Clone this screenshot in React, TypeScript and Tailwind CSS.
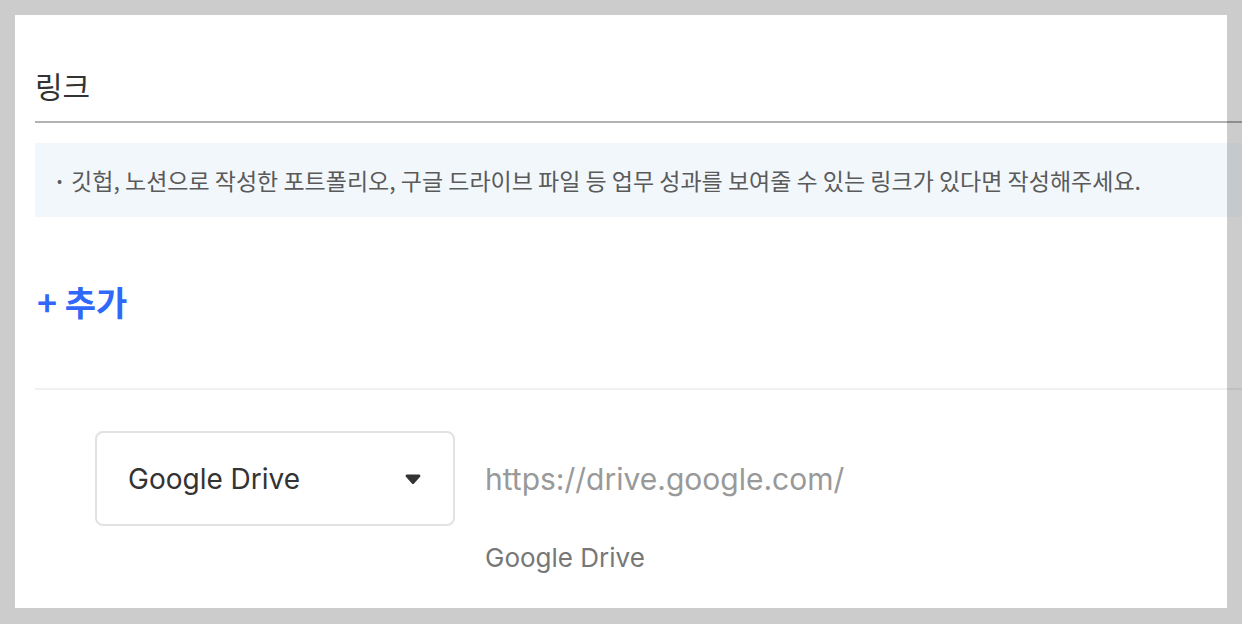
const kr = "font-['Noto_Sans_CJK_KR','Noto_Sans',sans-serif]";
const latin = "font-['Inter','Noto_Sans_CJK_KR',sans-serif]";

function Caret() {
  return (
    <svg width="16" height="12" viewBox="0 0 16 12" aria-hidden>
      <path d="M2 1.5h12a1.4 1.4 0 0 1 1.1 2.3l-6 6.6a1.5 1.5 0 0 1-2.2 0l-6-6.6A1.4 1.4 0 0 1 2 1.5z" fill="#333333" />
    </svg>
  );
}

export default function App() {
  return (
    <div className="h-[624px] w-full overflow-hidden bg-[#cccccc] p-[15px]">
      <div className="h-[593px] w-[1212px] bg-white pl-[20px] pt-[50px]">
        <div className="w-[1260px]">
          <div className="border-b-2 border-[rgba(0,0,0,0.3)] pb-[16px]">
            <h2 className={`${kr} text-[30px] font-normal leading-[40px] text-[#333333]`}>링크</h2>
          </div>

          <div className="mt-[20px] flex h-[74px] items-center bg-[rgba(130,180,225,0.1)] pl-[22px]">
            <span className={`${kr} mr-[9px] text-[15px] text-[#5a5a5a]`}>•</span>
            <p className={`${kr} text-[23px] leading-[30px] text-[#5a5a5a]`}>
              깃헙, 노션으로 작성한 포트폴리오, 구글 드라이브 파일 등 업무 성과를 보여줄 수 있는 링크가 있다면 작성해주세요.
            </p>
          </div>

          <button className={`${kr} mt-[65px] block pl-[2px] text-[34px] font-bold leading-[40px] text-[#3068fa]`}>+ 추가</button>

          <div className="mt-[66px] h-[2px] bg-[rgba(0,0,0,0.06)]" />

          <div className="ml-[60px] mt-[41px] flex items-start gap-[30px]">
            <div className="flex h-[95px] w-[360px] items-center justify-between rounded-[8px] border-2 border-[#e2e2e2] pl-[31px] pr-[32px]">
              <span className={`${latin} text-[28px] text-[#333333]`}>Google Drive</span>
              <Caret />
            </div>
            <div className="flex flex-col">
              <span className={`${latin} mt-[28px] text-[30px] leading-[40px] text-[#999999]`}>https://drive.google.com/</span>
              <span className={`${latin} mt-[41px] text-[26px] leading-[36px] text-[#777777]`}>Google Drive</span>
            </div>
          </div>
        </div>
      </div>
    </div>
  );
}
